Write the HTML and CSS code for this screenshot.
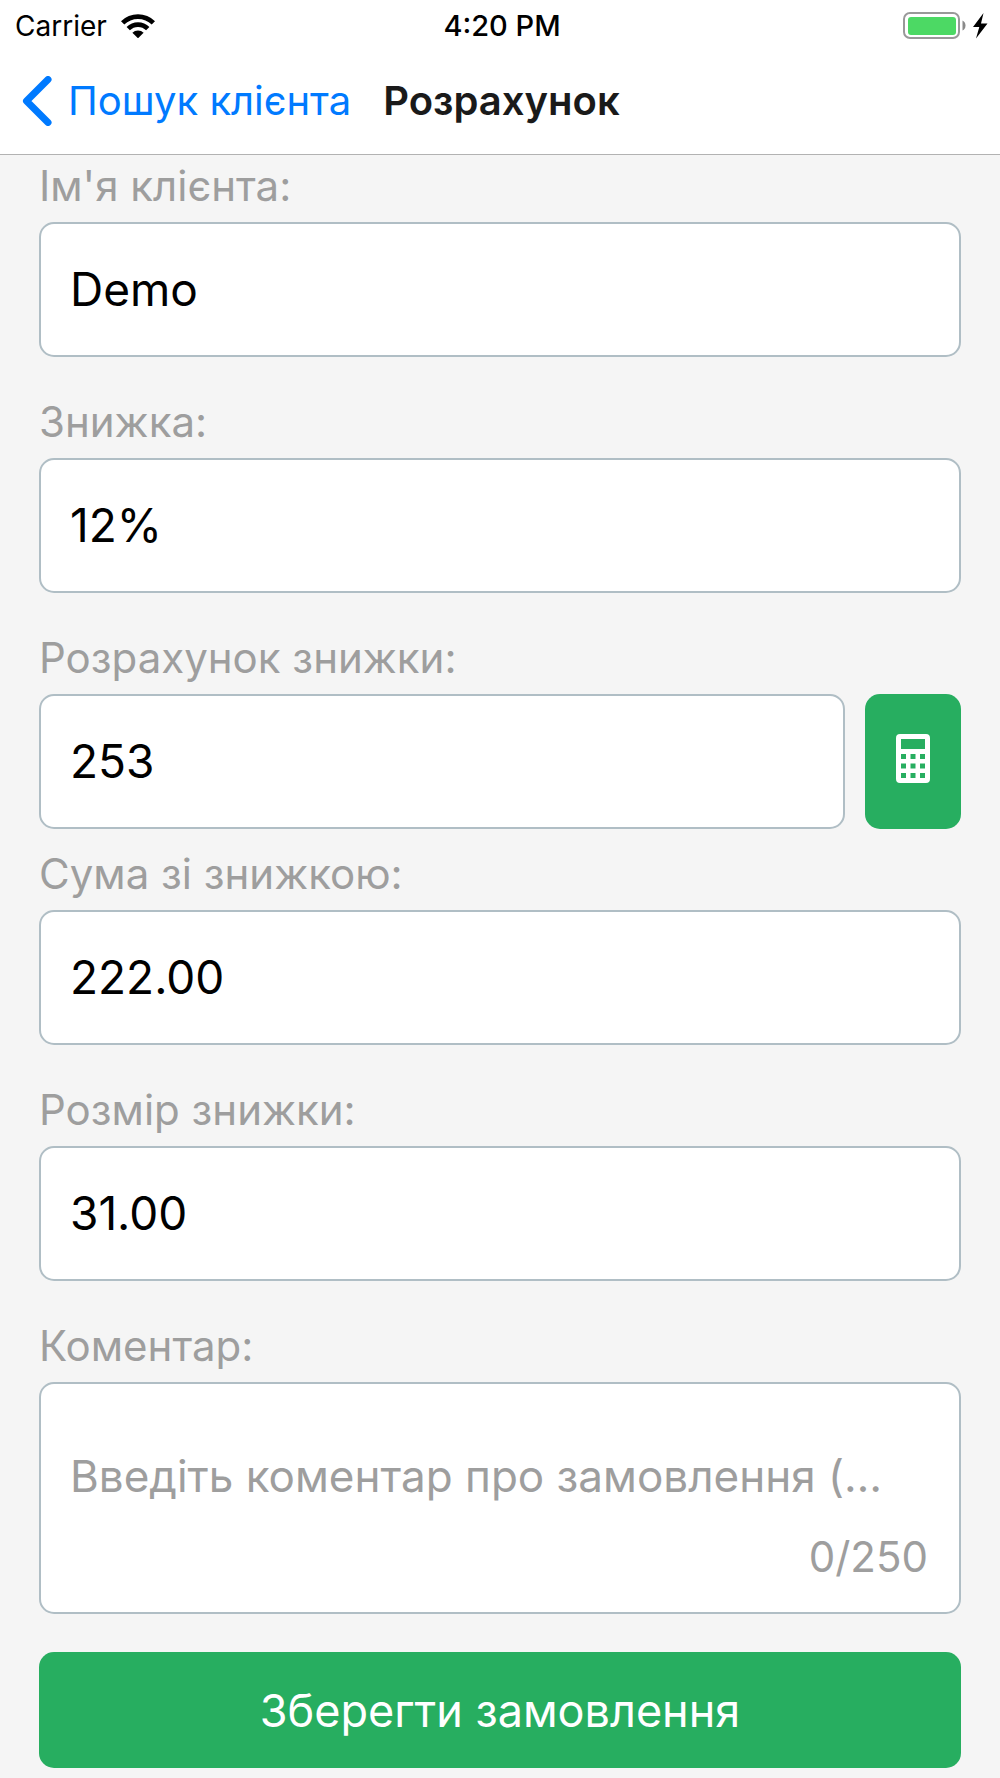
FILE: index.html
```html
<!DOCTYPE html>
<html lang="uk">
<head>
<meta charset="utf-8">
<meta name="viewport" content="width=device-width, initial-scale=1">
<title>Розрахунок</title>
<link rel="stylesheet" href="styles.css">
</head>
<body>
<header class="header">
  <div class="status">
    <div class="status-left">
      <span>Carrier</span>
      <svg class="wifi" viewBox="0 0 34 24" aria-hidden="true">
        <path d="M0 7.200A24 24 0 0 1 34 7.200L30.700 10.600A19.400 19.400 0 0 0 3.300 10.600Z"/>
        <path d="M5.600 13A16 16 0 0 1 28.400 13L25.100 16.300A11.500 11.500 0 0 0 8.900 16.300Z"/>
        <path d="M11.400 18.800A8 8 0 0 1 22.600 18.800L17 24.300Z"/>
      </svg>
    </div>
    <span class="time">4:20 PM</span>
    <div class="status-right">
      <svg class="battery" viewBox="0 0 86 28" aria-hidden="true">
        <rect x="1" y="1" width="55" height="25" rx="6" fill="#fff" stroke="#999" stroke-width="2"/>
        <rect x="5" y="5" width="48" height="18" rx="3" fill="#4cd964"/>
        <path d="M59.500 8.500q3 1.500 3 5t-3 5z" fill="#8a8a8a"/>
        <path d="M80.500 1L70 15h6.300L73 26.500L84.500 11.500H78z" fill="#000"/>
      </svg>
    </div>
  </div>
  <nav class="nav">
    <a class="back" href="#">
      <svg class="chevron" viewBox="0 0 30 50" aria-hidden="true"><path d="M26 3.500L4.500 25L26 46.500"/></svg>
      <span>Пошук клієнта</span>
    </a>
    <h1 class="title">Розрахунок</h1>
  </nav>
</header>
<main>
  <form class="form">
    <div class="field">
      <label class="label" for="name">Ім'я клієнта:</label>
      <input class="input" id="name" type="text" value="Demo">
    </div>
    <div class="field">
      <label class="label" for="discount">Знижка:</label>
      <input class="input" id="discount" type="text" value="12%">
    </div>
    <div class="field field-close">
      <label class="label" for="amount">Розрахунок знижки:</label>
      <div class="row">
        <input class="input" id="amount" type="text" inputmode="decimal" value="253">
        <button class="calc" type="button" aria-label="Розрахувати">
          <svg class="calc-icon" viewBox="0 0 34 49" aria-hidden="true">
            <path fill-rule="evenodd" d="M4 0h26a4 4 0 0 1 4 4v41a4 4 0 0 1-4 4H4a4 4 0 0 1-4-4V4a4 4 0 0 1 4-4zM5 5v10h24V5zM5 20v5h5v-5zM14.500 20v5h5v-5zM24 20v5h5v-5zM5 29.500v5h5v-5zM14.500 29.500v5h5v-5zM24 29.500v5h5v-5zM5 39v5h5v-5zM14.500 39v5h5v-5zM24 39v5h5v-5z"/>
          </svg>
        </button>
      </div>
    </div>
    <div class="field">
      <label class="label" for="total">Сума зі знижкою:</label>
      <input class="input" id="total" type="text" value="222.00">
    </div>
    <div class="field">
      <label class="label" for="saved">Розмір знижки:</label>
      <input class="input" id="saved" type="text" value="31.00">
    </div>
    <div class="field field-last">
      <label class="label" for="comment">Коментар:</label>
      <div class="comment">
        <textarea class="comment-text" id="comment" rows="1" maxlength="250" placeholder="Введіть коментар про замовлення (…"></textarea>
        <span class="counter">0/250</span>
      </div>
    </div>
    <button class="save" type="submit">Зберегти замовлення</button>
  </form>
</main>
</body>
</html>
```
FILE: styles.css
```css
* {
  box-sizing: border-box;
}

body {
  margin: 0;
  background: #f5f5f5;
  color: #000;
  font-family: Inter, "Liberation Sans", sans-serif;
}

.header {
  background: #fff;
  border-bottom: 1px solid #b2b2b2;
}

.status {
  display: grid;
  grid-template-columns: 1fr auto 1fr;
  align-items: center;
  height: 50px;
  padding: 0 11px 0 15px;
  font-size: 28px;
  line-height: 52px;
}

.status-left {
  display: flex;
  align-items: center;
  gap: 14px;
}

.wifi {
  width: 34px;
  height: 24px;
}

.time {
  font-size: 29px;
  font-weight: 500;
}

.status-right {
  display: flex;
  justify-content: flex-end;
}

.battery {
  width: 86px;
  height: 28px;
}

.nav {
  display: flex;
  align-items: center;
  gap: 32px;
  height: 104px;
  padding: 0 22px 2px;
  font-size: 40px;
  line-height: 48px;
}

.back {
  display: flex;
  align-items: center;
  gap: 16px;
  color: #007aff;
  text-decoration: none;
}

.chevron {
  width: 30px;
  height: 50px;
  fill: none;
  stroke: #007aff;
  stroke-width: 7;
  stroke-linecap: round;
  stroke-linejoin: round;
}

.title {
  margin: 0;
  color: #1a1a1a;
  font-size: 40px;
  font-weight: 600;
}

.form {
  display: flex;
  flex-direction: column;
  padding: 6px 39px 10px;
}

.field {
  display: flex;
  flex-direction: column;
  gap: 11px;
  margin-bottom: 40px;
}

.field-close {
  margin-bottom: 20px;
}

.field-last {
  margin-bottom: 38px;
}

.label {
  color: #9e9e9e;
  font-size: 42px;
  line-height: 50px;
}

.input {
  width: 100%;
  min-width: 0;
  height: 135px;
  padding: 0 29px 2px;
  border: 2px solid #b0bec5;
  border-radius: 15px;
  background: #fff;
  color: #000;
  font: inherit;
  font-size: 46px;
}

.row {
  display: flex;
  gap: 20px;
}

.calc {
  display: flex;
  flex: none;
  align-items: center;
  justify-content: center;
  width: 96px;
  padding: 0 0 6px;
  border: 0;
  border-radius: 15px;
  background: #27ae60;
}

.calc-icon {
  width: 34px;
  height: 49px;
  fill: #fff;
}

.comment {
  display: flex;
  flex-direction: column;
  padding: 62px 31px 30px 29px;
  border: 2px solid #b0bec5;
  border-radius: 15px;
  background: #fff;
}

.comment-text {
  height: 60px;
  padding: 0;
  border: 0;
  background: transparent;
  color: #000;
  font: inherit;
  font-size: 44px;
  line-height: 60px;
  overflow: hidden;
  resize: none;
}

.comment-text::placeholder {
  color: #9e9e9e;
}

.counter {
  margin-top: 26px;
  color: #9e9e9e;
  font-size: 42px;
  line-height: 50px;
  text-align: right;
}

.save {
  height: 116px;
  padding: 0;
  border: 0;
  border-radius: 15px;
  background: #27ae60;
  color: #fff;
  font: inherit;
  font-size: 45px;
}
```
